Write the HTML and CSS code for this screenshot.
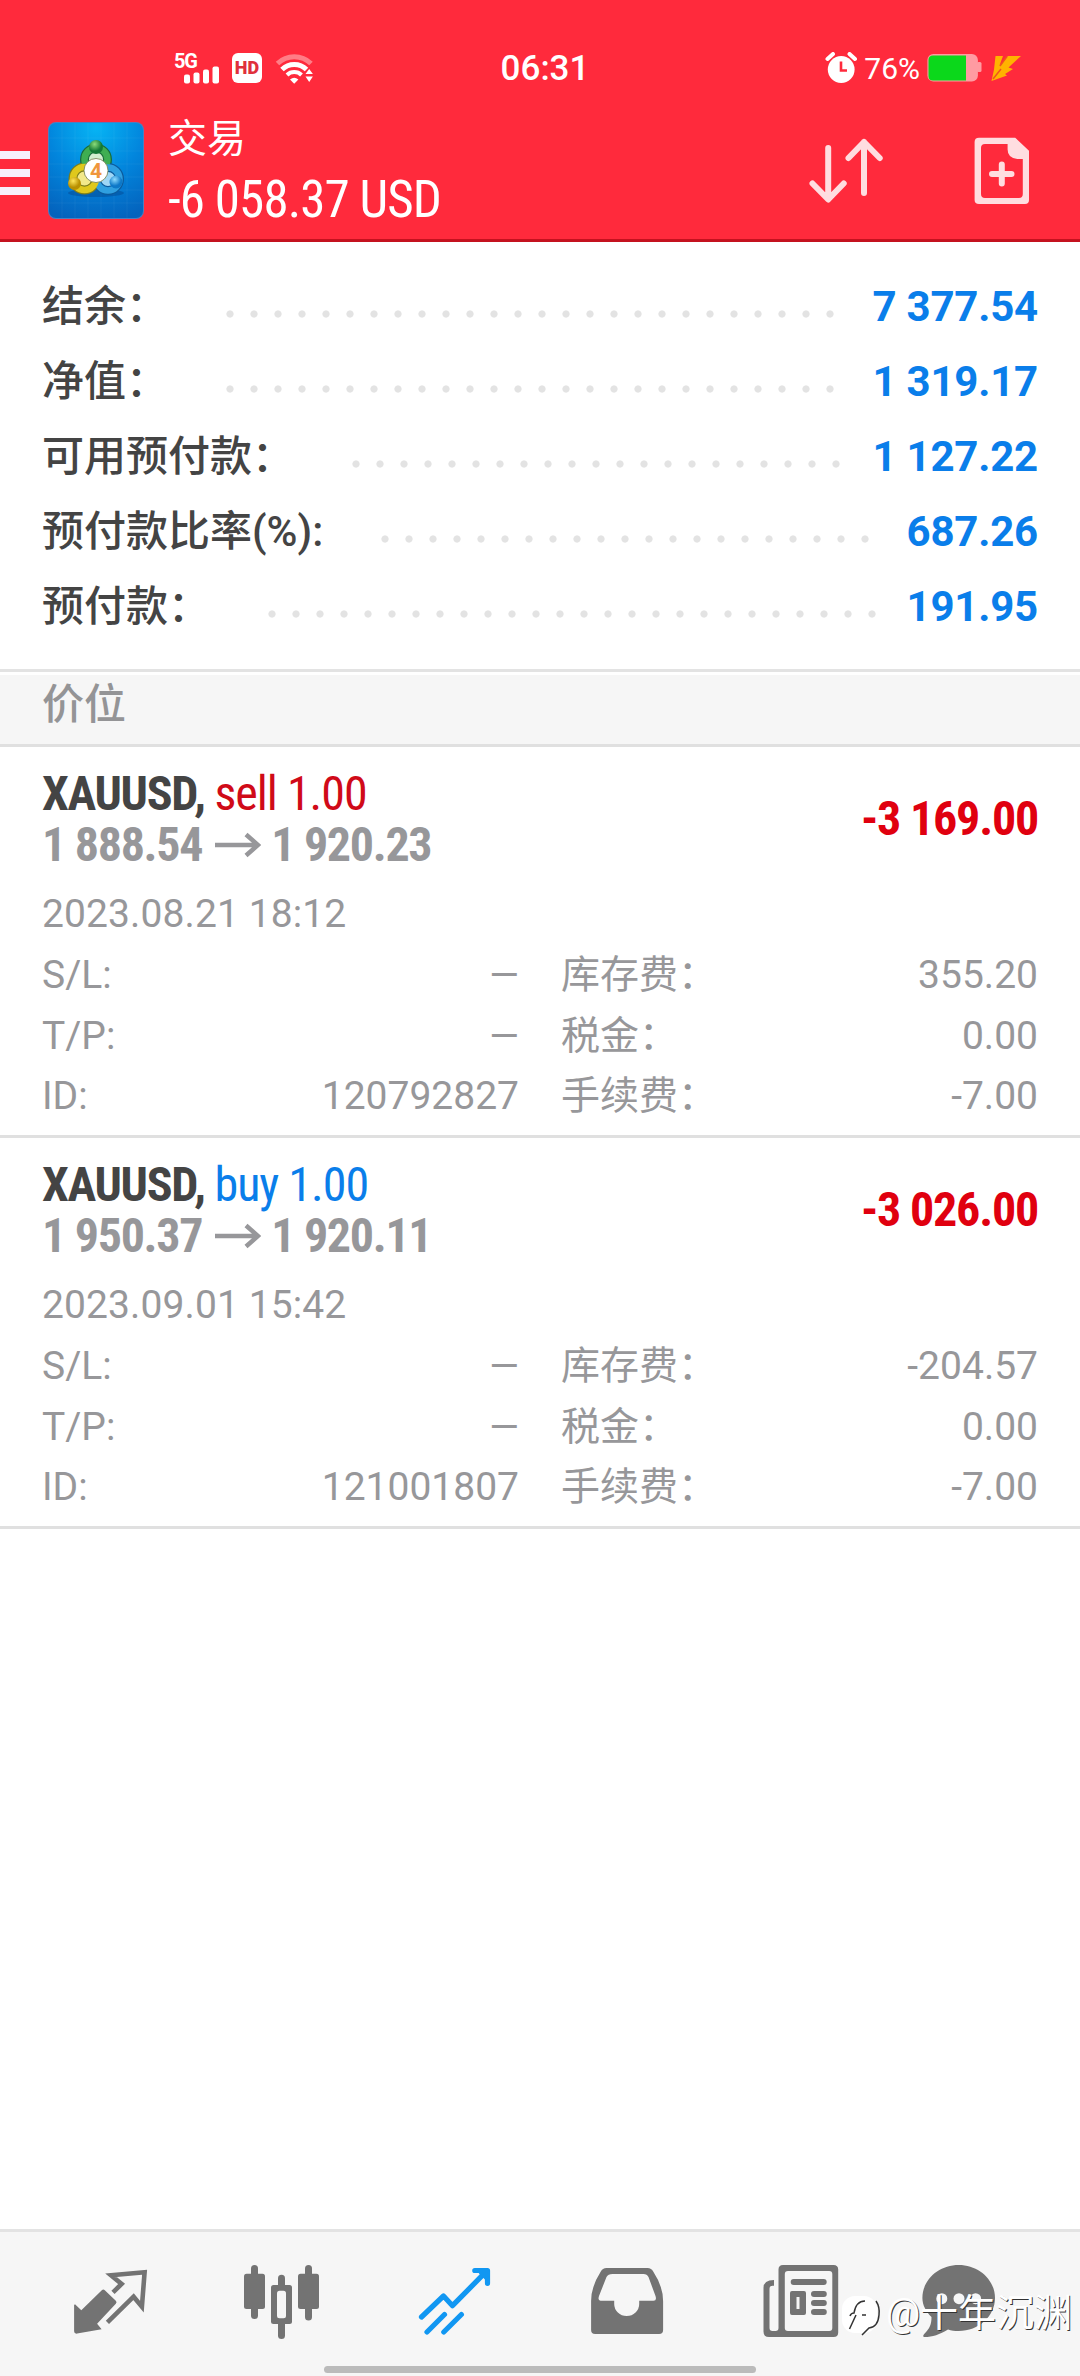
FILE: index.html
```html
<!DOCTYPE html>
<html lang="zh-CN">
<head>
<meta charset="utf-8">
<title>交易</title>
<link rel="stylesheet" href="styles.css">
</head>
<body>
<div class="screen">
  <header class="header">
    <div class="status">
      <div class="status-left">
        <svg width="46" height="36" viewBox="174 49 46 36">
          <text class="net-label" x="174" y="66.5" textLength="24">5G</text>
          <g fill="#fff"><rect x="184" y="73.5" width="6" height="9" rx="2"/><rect x="193.500" y="71.500" width="6" height="11" rx="2"/><rect x="203" y="68.500" width="6" height="14" rx="2"/><rect x="212.500" y="65.500" width="6.500" height="17" rx="2"/></g>
        </svg>
        <span class="hd">HD</span>
        <svg width="40" height="34" viewBox="275 50 40 34" fill="none" stroke="#fff">
          <path d="M278.500 62.500a24 24 0 0 1 33.500 0" stroke="#ff7d86" stroke-width="5"/>
          <path d="M283 68.500a17.500 17.500 0 0 1 24.500 0" stroke-width="5"/>
          <path d="M288 74a10.500 10.500 0 0 1 14.500 0" stroke-width="4"/>
          <path d="M291 78.500q4.200-3.500 8.400 0l-4.200 4.200z" fill="#fff" stroke="none"/>
          <path d="M306.500 73l3.700-5 3.700 5zM306.500 75.500h7.400l-3.700 5.500z" fill="#fff" stroke="none"/>
        </svg>
      </div>
      <time class="clock">06:31</time>
      <div class="status-right">
        <svg width="32" height="32" viewBox="822 52 32 32">
          <circle cx="838.200" cy="69.500" r="13.400" fill="#fff"/>
          <path d="M824.500 59l5.500-5M852 59l-5.500-5" stroke="#fff" stroke-width="4" stroke-linecap="round"/>
          <path d="M838 61.500v9h6" stroke="#ff2a3c" stroke-width="2.600" fill="none"/>
        </svg>
        <span class="percent">76%</span>
        <svg width="56" height="30" viewBox="927 54 56 30">
          <rect x="927.400" y="55" width="50.500" height="27.500" rx="6" fill="#ff9ba2"/>
          <rect x="977" y="63" width="4.500" height="10" rx="1.500" fill="#ff9ba2"/>
          <path d="M966 56.500v25h-33q-4.500 0-4.500-4.500v-16q0-4.500 4.500-4.500z" fill="#0bd81b"/>
        </svg>
        <svg width="32" height="28" viewBox="989 53 32 28">
          <path d="M994.500 55h7.500l-3.500 9.500 8.500-9.500h13l-12.500 11.500 4.500 1.500-8 5 2 1.500-15.500 5.500 2.500-11.500z" fill="#ffb300"/>
          <path d="M992 78l8-10M999 65l7-9.500" stroke="#f0541e" stroke-width="1.500"/>
        </svg>
      </div>
    </div>
    <div class="toolbar">
      <div class="menu"><i></i><i></i><i></i></div>
      <svg class="app-icon" width="96" height="97" viewBox="0 0 96 97">
        <defs>
          <radialGradient id="sky" cx=".5" cy=".05" r="1"><stop offset="0" stop-color="#06b4f4"/><stop offset=".5" stop-color="#0286dd"/><stop offset="1" stop-color="#0463bd"/></radialGradient>
          <radialGradient id="green" cx=".4" cy=".3"><stop offset="0" stop-color="#8bdc7a"/><stop offset="1" stop-color="#147a35"/></radialGradient>
          <radialGradient id="gold" cx=".4" cy=".3"><stop offset="0" stop-color="#ffe65a"/><stop offset="1" stop-color="#b99000"/></radialGradient>
          <radialGradient id="blue" cx=".4" cy=".3"><stop offset="0" stop-color="#8fdcff"/><stop offset="1" stop-color="#0d78c8"/></radialGradient>
        </defs>
        <rect width="96" height="97" rx="8" fill="#4c7fc0"/>
        <rect x="1" y="1" width="94" height="95" rx="7" fill="url(#sky)"/>
        <path d="M14 1v95M27 1v95M40 1v95M53 1v95M66 1v95M79 1v95M1 16h94M1 29h94M1 42h94M1 55h94M1 68h94M1 81h94" stroke="#fff" stroke-opacity=".05"/>
        <ellipse cx="48" cy="71" rx="28" ry="4" fill="#034a93" opacity=".5"/>
        <g stroke-width="9">
          <circle cx="48" cy="37.500" r="11.500" fill="#d2efcf" stroke="#1a6b3c"/>
          <circle cx="60" cy="57" r="11.500" fill="#9fd6f5" stroke="#0c5a9c"/>
          <circle cx="36.500" cy="56.500" r="11.500" fill="#f2e88a" stroke="#7c7d1c"/>
        </g>
        <g fill="none" stroke-width="6.500">
          <circle cx="48" cy="37.500" r="11.500" stroke="#3fae52"/>
          <circle cx="60" cy="57" r="11.500" stroke="#2f9fe0"/>
          <circle cx="36.500" cy="56.500" r="11.500" stroke="#dfc81c"/>
        </g>
        <circle cx="48" cy="25" r="7" fill="url(#green)"/>
        <circle cx="26.500" cy="61.500" r="6.500" fill="url(#gold)"/>
        <circle cx="68" cy="60" r="6.500" fill="url(#blue)"/>
        <circle cx="48" cy="48.500" r="12" fill="#fff" stroke="#6d7a4a" stroke-width=".8"/>
        <text class="app-digit" x="48" y="56">4</text>
      </svg>
      <div class="heading">
        <div class="heading-title">交易</div>
        <div class="heading-value">-6 058.37 USD</div>
      </div>
      <svg class="action" width="80" height="76" viewBox="806 133 80 76" fill="none" stroke="#ffdde0" stroke-width="6" stroke-linecap="round" stroke-linejoin="round">
        <path d="M828.200 148v51M812.500 183.500l15.700 16 15.500-16M864 193v-51M848.500 158l15.500-16 15.700 16"/>
      </svg>
      <svg class="action-new" width="60" height="76" viewBox="972 133 60 76">
        <path fill="#ffdde0" fill-rule="evenodd" d="M979 137.700h36.200l13.800 13V200q0 4-4 4h-46q-4.400 0-4.400-4v-58q0-4.300 4.400-4.300zM985 144q-4 0-4 4v46q0 4 4 4h34q3.800 0 3.800-4V159h-5.500q-9.700-1-9.700-9.500V144z"/>
        <path d="M1001.800 164.500v19M992 174h19.500" stroke="#ffdde0" stroke-width="6" stroke-linecap="round"/>
      </svg>
    </div>
  </header>

  <section class="summary">
    <div class="sum-row"><span>结余：</span><i class="dots"></i><b>7 377.54</b></div>
    <div class="sum-row"><span>净值：</span><i class="dots"></i><b>1 319.17</b></div>
    <div class="sum-row"><span>可用预付款：</span><i class="dots"></i><b>1 127.22</b></div>
    <div class="sum-row"><span>预付款比率(%):</span><i class="dots"></i><b>687.26</b></div>
    <div class="sum-row"><span>预付款：</span><i class="dots"></i><b>191.95</b></div>
  </section>

  <h2 class="section-title">价位</h2>

  <article class="position">
    <div class="pos-head">
      <div>
        <div class="pos-line"><b>XAUUSD,</b> <span class="sell">sell 1.00</span></div>
        <div class="pos-line price"><b>1 888.54</b><svg class="arrow" width="46" height="26" viewBox="0 0 46 26"><path d="M0 13h43M31 2.500L43 13 31 23.500"/></svg><b>1 920.23</b></div>
      </div>
      <b class="profit">-3 169.00</b>
    </div>
    <div class="date">2023.08.21 18:12</div>
    <div class="details">
      <span>S/L:</span><span class="dash">—</span><span class="fee">库存费：</span><span>355.20</span>
      <span>T/P:</span><span class="dash">—</span><span class="fee">税金：</span><span>0.00</span>
      <span>ID:</span><span>120792827</span><span class="fee">手续费：</span><span>-7.00</span>
    </div>
  </article>

  <article class="position">
    <div class="pos-head">
      <div>
        <div class="pos-line"><b>XAUUSD,</b> <span class="buy">buy 1.00</span></div>
        <div class="pos-line price"><b>1 950.37</b><svg class="arrow" width="46" height="26" viewBox="0 0 46 26"><path d="M0 13h43M31 2.500L43 13 31 23.500"/></svg><b>1 920.11</b></div>
      </div>
      <b class="profit">-3 026.00</b>
    </div>
    <div class="date">2023.09.01 15:42</div>
    <div class="details">
      <span>S/L:</span><span class="dash">—</span><span class="fee">库存费：</span><span>-204.57</span>
      <span>T/P:</span><span class="dash">—</span><span class="fee">税金：</span><span>0.00</span>
      <span>ID:</span><span>121001807</span><span class="fee">手续费：</span><span>-7.00</span>
    </div>
  </article>

  <nav class="tabs">
    <svg viewBox="24 0 172 144">
      <path d="M75 72.300l6.300 6 20.500-20q1.500-1.500 3 0l11 10.500q1.500 1.500 0 3L97.100 91.700l4.500 5.600-24.500 4.300q-3 .3-3-2.300V73z" fill="#737373"/>
      <path d="M113 60.300l8.600-8.300-10.600-8.700 33.600-3-2.700 34.400-8.300-10-26.200 25.600" fill="none" stroke="#737373" stroke-width="4.600" stroke-linejoin="miter"/>
    </svg>
    <svg viewBox="196 0 172 144" fill="#737373">
      <rect x="244" y="41.700" width="21" height="35.300" rx="2.500"/><rect x="251" y="33" width="7" height="54" rx="3.500"/>
      <rect x="298" y="41.700" width="21" height="35.300" rx="2.500"/><rect x="305" y="33" width="7" height="55.500" rx="3.500"/>
      <rect x="278" y="42.700" width="7" height="64.300" rx="3.500"/><rect x="271" y="53" width="21" height="39" rx="2.500"/><rect x="277" y="58.700" width="9" height="27.600" rx="2.500" fill="#f6f6f6"/>
    </svg>
    <svg viewBox="367 0 172 144" fill="none" stroke="#1197f2" stroke-width="5.200" stroke-linecap="round" stroke-linejoin="round">
      <path d="M420.500 85l22-21 9 9.700L486 38.700M473.800 38.500h12.700v12.800M426 100l17.500-17.500M442.800 100l17.600-17.500"/>
      <path d="M480 40h6v6z"/>
    </svg>
    <svg viewBox="539.5 0 172 144">
      <path fill="#737373" fill-rule="evenodd" d="M606 36h41q4 0 5.700 3.500 9.900 15 9.900 29.500v29q0 4-4 4h-64q-4 0-4-4V69q0-14.500 9.700-29.500Q602 36 606 36zM612 42q-4.500 0-6 3l-7.500 19q-1.500 4.700 1.500 4.700h13.700v3.300a12.500 12 0 0 0 25 0v-3.300H653q3.500 0 2-4.700L648 45q-1.500-3-5-3z"/>
    </svg>
    <svg viewBox="711 0 172 144" fill="#737373">
      <path fill-rule="evenodd" d="M782 33h50.500q4.700 0 4.700 4.500v63q0 4.500-4.700 4.500H768q-5.500 0-5.500-5.500V56q0-8 10.500-8v5.700h-1.500q-3 0-3 3V96q0 3 3 3h3q3 0 3-3V37.500q0-4.500 4.500-4.500zM787 39q-3.200 0-3.200 3v54q0 3 3.200 3h41.300q3 0 3-3V42q0-3-3-3z"/>
      <rect x="789.700" y="47" width="36" height="6" rx="3"/>
      <path fill-rule="evenodd" d="M791 59h12q2 0 2 2v20q0 2-2 2h-12q-2 0-2-2V61q0-2 2-2zM795.500 65v12h3V65z"/>
      <rect x="810" y="59" width="15.800" height="6" rx="3"/><rect x="810" y="68" width="15.800" height="6" rx="3"/><rect x="810" y="77" width="15.800" height="6" rx="3"/>
    </svg>
    <svg viewBox="883 0 172 144">
      <path fill="#737373" d="M957.700 33c20 0 36.300 14.800 36.300 33s-16.300 33-36.300 33c-4 0-7.500-.5-10.700-1.500-8 5-16 7.500-23 7.500-2.500 0-2-1.800-.8-3 5.500-5.500 7.300-9.500 7.300-17-5.500-5.500-9.100-12-9.100-19 0-18.200 16.300-33 36.300-33z"/>
      <g fill="#f6f6f6"><circle cx="940.800" cy="66.700" r="5.500"/><circle cx="958" cy="66.700" r="5.500"/><circle cx="974.600" cy="66.700" r="5.500"/></g>
    </svg>
    <div class="home-bar"></div>
    <div class="watermark">
      <svg width="42" height="50" viewBox="839 56 42 50">
        <rect x="841" y="64" width="35" height="37" rx="13" fill="#fff"/>
        <path d="M848.500 97l6.500-14M849 84q1-3 4-3 2-12 11-12M861 83h4M875 69q4 6 3 14-1 12-10 13l-7 7" fill="none" stroke="#333" stroke-width="1.500"/>
      </svg>
      <span>@十年沉渊</span>
    </div>
  </nav>
</div>
</body>
</html>
```
FILE: styles.css
```css
* { box-sizing: border-box; }

body {
  margin: 0;
  background: #fff;
  font-family: Roboto, "Noto Sans CJK SC", sans-serif;
  color: #444;
}

svg { display: block; flex: none; }

.screen {
  width: 1080px;
  height: 2376px;
  display: flex;
  flex-direction: column;
  overflow: hidden;
}

/* Header */
.header {
  height: 242px;
  background: #ff2a3c;
  border-bottom: 3px solid #c4121f;
  color: #fff;
}

.status {
  height: 110px;
  padding: 26px 58px 0 174px;
  display: grid;
  grid-template-columns: 1fr auto 1fr;
  align-items: center;
}

.status-left, .status-right { display: flex; align-items: center; }
.status-left { gap: 12px; }
.status-right { justify-content: flex-end; gap: 7px; }

.net-label { font: 700 20px Roboto, sans-serif; fill: #fff; }

.hd {
  width: 30px;
  height: 30px;
  border-radius: 6px;
  background: #fff;
  color: #e0303c;
  font-size: 18px;
  font-weight: 900;
  line-height: 30px;
  text-align: center;
}

.clock { font-size: 35px; font-weight: 500; margin-right: 106px; }
.percent { font-size: 30px; }

.toolbar { display: flex; height: 129px; }

.menu {
  width: 30px;
  margin-right: 18px;
  padding-top: 41px;
  display: flex;
  flex-direction: column;
  gap: 10px;
}
.menu i { height: 8px; background: #f7effb; }

.app-icon { margin-top: 12px; }
.app-digit { font: 700 21px Roboto, sans-serif; fill: #f0963c; text-anchor: middle; }

.heading { margin-left: 24px; flex: 1; }
.heading-title { font-size: 39px; line-height: 58px; }
.heading-value {
  font-size: 51px;
  font-stretch: 75%;
  font-weight: 450;
  letter-spacing: -.9px;
  line-height: 63px;
}

.action { margin: 23px 86px 0 0; }
.action-new { margin: 23px 48px 0 0; }

/* Account summary */
.summary { padding: 27px 42px 25px; border-bottom: 3px solid #e3e3e3; }
.sum-row {
  display: flex;
  height: 75px;
  font-size: 42px;
  line-height: 75px;
  font-weight: 500;
}
.sum-row b { color: #0a7eea; font-weight: 700; letter-spacing: -.2px; }
.dots {
  flex: 1;
  margin: 0 24px 0 58px;
  background: radial-gradient(circle at 4px 45px, #e3e3e3 3.200px, transparent 4px) 0 0 / 24px 75px repeat-x;
}

.section-title {
  margin: 3px 0 0;
  height: 72px;
  padding-left: 42px;
  background: #f6f6f6;
  border-bottom: 3px solid #e0e0e0;
  color: #949496;
  font-size: 42px;
  font-weight: 500;
  line-height: 60px;
}

/* Open positions */
.position {
  height: 391px;
  padding: 21px 42px 0;
  border-bottom: 3px solid #e0e0e0;
  color: #97979a;
  font-size: 39px;
}
.pos-head {
  display: flex;
  justify-content: space-between;
  align-items: center;
  height: 102px;
  font-size: 48px;
  font-stretch: 75%;
}
.pos-line {
  line-height: 51px;
  letter-spacing: -1.300px;
  color: #444;
}
.pos-line .sell, .pos-line .buy { letter-spacing: -1px; }
.price { display: flex; align-items: center; color: #97979a; }
.arrow { margin: 1px 10px 0 13px; fill: none; stroke: #97979a; stroke-width: 4.500; }
.sell { color: #d00a18; }
.buy { color: #0a7eea; }
.profit { color: #e0000f; letter-spacing: -1.200px; margin-top: -2px; }

.date { margin-top: 14px; line-height: 61px; letter-spacing: .1px; }
.details {
  display: grid;
  grid-template-columns: 120px 357px 200px 1fr;
  grid-auto-rows: 60.670px;
  line-height: 61px;
}
.details span:nth-child(even) { text-align: right; }
.details .fee { padding-left: 42px; white-space: nowrap; }
.details .dash { font-size: 38px; line-height: 60px; }

/* Bottom tab bar */
.tabs {
  position: relative;
  margin-top: auto;
  height: 147px;
  padding: 0 24px;
  display: flex;
  background: #f6f6f6;
  border-top: 3px solid #e3e3e3;
}
.tabs > svg { width: 172px; height: 144px; }

.home-bar {
  position: absolute;
  left: 324px;
  bottom: 3px;
  width: 432px;
  height: 7px;
  border-radius: 4px;
  background: #bbb;
}

.watermark {
  position: absolute;
  left: 840px;
  top: 56px;
  display: flex;
  align-items: center;
  gap: 4px;
  color: #fff;
  font-size: 38px;
  line-height: 50px;
  text-shadow: 1px 1px 0 #333;
}
```
